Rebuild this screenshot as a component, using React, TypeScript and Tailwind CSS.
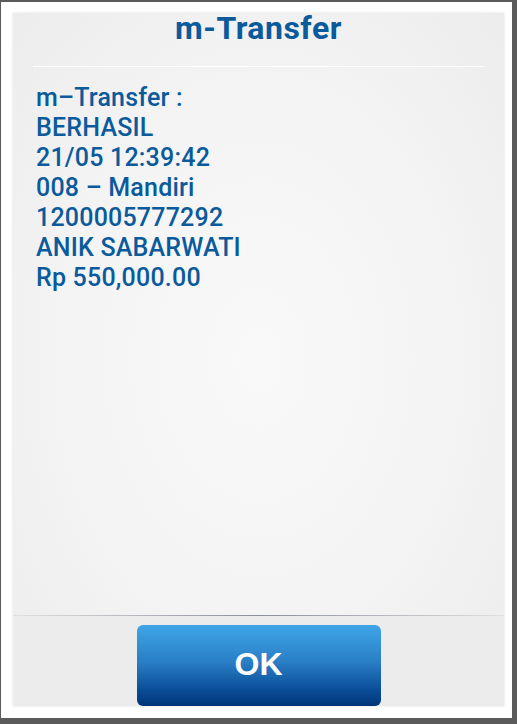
import React from 'react'

const lines = [
    'm\u2013Transfer :',
    'BERHASIL',
    '21/05 12:39:42',
    '008 \u2013 Mandiri',
    '1200005777292',
    'ANIK SABARWATI',
    'Rp 550,000.00',
]

export default function App() {
    return (
        <div className="w-[517px] h-[724px] bg-[#5b5b5b] pt-[2px] pl-[1px] overflow-hidden">
            <div className="w-[511px] h-[716px] bg-white pt-[11px] pl-[12px] pr-[8px] pb-[12px]">
                <div className="flex h-full flex-col bg-[radial-gradient(ellipse_at_center,#f9f9f9_0%,#f3f3f3_60%,#ececec_100%)] shadow-[0_0_3px_rgba(0,0,0,0.12)]">
                    <div className="h-[53px] text-center font-['Roboto',sans-serif] text-[32px] font-bold leading-[30px] tracking-[0.5px] text-[#0a5a9c]">
                        m-Transfer
                    </div>
                    <div className="mx-[20px] h-px bg-white" />
                    <div className="flex-1 pl-[23px] pt-[16px] font-['Roboto',sans-serif] text-[25px] font-medium leading-[30px] tracking-[0.2px] text-[#0a5a9c]">
                        {lines.map((l) => (
                            <div key={l}>{l}</div>
                        ))}
                    </div>
                    <div className="h-px bg-[linear-gradient(90deg,#e0e0e0_0%,#8a8f9c_50%,#e0e0e0_100%)]" />
                    <div className="flex h-[90px] items-end justify-center bg-[#ececec] pt-[10px]">
                        <button className="h-[81px] w-[244px] rounded-[6px] bg-[linear-gradient(180deg,#3ea6e6_0%,#2a7fc7_45%,#0a4e98_80%,#003577_100%)] pb-[4px] font-['Liberation_Sans',Arial,sans-serif] text-[32px] font-bold text-white">
                            OK
                        </button>
                    </div>
                </div>
            </div>
        </div>
    )
}
